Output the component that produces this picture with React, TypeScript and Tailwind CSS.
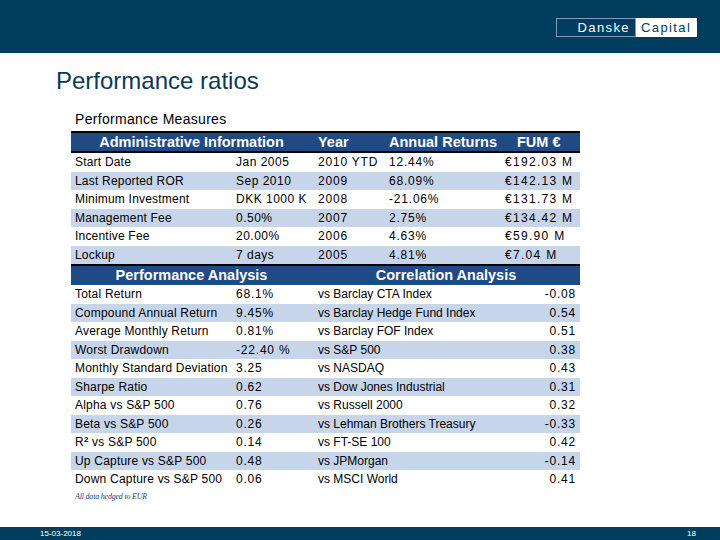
import React from 'react'

const adminRows = [
  ['Start Date', 'Jan 2005', '2010 YTD', '12.44%', '€192.03 M'],
  ['Last Reported ROR', 'Sep 2010', '2009', '68.09%', '€142.13 M'],
  ['Minimum Investment', 'DKK 1000 K', '2008', '-21.06%', '€131.73 M'],
  ['Management Fee', '0.50%', '2007', '2.75%', '€134.42 M'],
  ['Incentive Fee', '20.00%', '2006', '4.63%', '€59.90 M'],
  ['Lockup', '7 days', '2005', '4.81%', '€7.04 M'],
]

const perfRows: [React.ReactNode, string, string, string][] = [
  ['Total Return', '68.1%', 'vs Barclay CTA Index', '-0.08'],
  ['Compound Annual Return', '9.45%', 'vs Barclay Hedge Fund Index', '0.54'],
  ['Average Monthly Return', '0.81%', 'vs Barclay FOF Index', '0.51'],
  ['Worst Drawdown', '-22.40 %', 'vs S&P 500', '0.38'],
  ['Monthly Standard Deviation', '3.25', 'vs NASDAQ', '0.43'],
  ['Sharpe Ratio', '0.62', 'vs Dow Jones Industrial', '0.31'],
  ['Alpha vs S&P 500', '0.76', 'vs Russell 2000', '0.32'],
  ['Beta vs S&P 500', '0.26', 'vs Lehman Brothers Treasury', '-0.33'],
  [<>R<sup className="text-[8px] font-bold">2</sup> vs S&P 500</>, '0.14', 'vs FT-SE 100', '0.42'],
  ['Up Capture vs S&P 500', '0.48', 'vs JPMorgan', '-0.14'],
  ['Down Capture vs S&P 500', '0.06', 'vs MSCI World', '0.41'],
]

const Logo = () => (
  <div className="flex items-stretch h-[19px] text-[13px] tracking-[1.4px]">
    <div className="w-[80px] border border-[#7f9db3] flex items-center justify-end pr-[5px] text-white">
      Danske
    </div>
    <div className="w-[61px] bg-white flex items-center pl-[4px] text-[#003d5e] border border-white">
      Capital
    </div>
  </div>
)

const App = () => {
  return (
    <div className="w-[720px] h-[540px] flex flex-col bg-white font-['Liberation_Sans',Arial,sans-serif] overflow-hidden">
      {/* Kopfleiste */}
      <div className="h-[53px] bg-[#003d5e] flex items-start justify-end pr-[23px] pt-[18px]">
        <Logo />
      </div>

      <div className="flex-1 flex flex-col">
        <h1 className="ml-[56px] mt-[14px] text-[24px] leading-[28px] text-[#0b3a55]">Performance ratios</h1>
        <div className="ml-[75px] mt-[16px] text-[14px] leading-[16px] tracking-[0.3px] text-black">
          Performance Measures
        </div>

        {/* Tabelle */}
        <div className="ml-[71px] mt-[4px] w-[509px] text-[12px] text-black">
          <div className="grid grid-cols-[241px_74px_114px_80px] h-[22px] bg-[#1f4a85] border-y-2 border-black text-white font-bold text-[14.5px] items-center leading-[17px]">
            <div className="text-center">Administrative Information</div>
            <div className="pl-[6px]">Year</div>
            <div className="pl-[3px]">Annual Returns</div>
            <div className="pl-[17px]">FUM €</div>
          </div>
          {adminRows.map((r, i) => (
            <div
              key={i}
              className={`grid grid-cols-[162px_79px_74px_114px_80px] h-[18.5px] items-center leading-[14px] ${i % 2 === 1 ? 'bg-[#c6d5ea]' : ''}`}
            >
              <div className="pl-[4px] tracking-[0.2px] whitespace-nowrap">{r[0]}</div>
              <div className="pl-[3px] tracking-[0.5px] whitespace-nowrap">{r[1]}</div>
              <div className="pl-[6px] tracking-[0.8px] whitespace-nowrap">{r[2]}</div>
              <div className="pl-[3px] tracking-[0.8px]">{r[3]}</div>
              <div className="pl-[5px] tracking-[1.3px] whitespace-nowrap">{r[4]}</div>
            </div>
          ))}

          <div className="grid grid-cols-[241px_268px] h-[21px] bg-[#1f4a85] border-t-2 border-black text-white font-bold text-[14.5px] items-center leading-[17px]">
            <div className="text-center">Performance Analysis</div>
            <div className="text-center">Correlation Analysis</div>
          </div>
          {perfRows.map((r, i) => (
            <div
              key={i}
              className={`grid grid-cols-[162px_79px_1fr_auto] h-[18.5px] items-center leading-[14px] ${i % 2 === 1 ? 'bg-[#c6d5ea]' : ''}`}
            >
              <div className="pl-[4px] tracking-[0.2px] whitespace-nowrap">{r[0]}</div>
              <div className="pl-[3px] tracking-[0.8px]">{r[1]}</div>
              <div className="pl-[6px] whitespace-nowrap">{r[2]}</div>
              <div className="pr-[4px] tracking-[0.8px]">{r[3]}</div>
            </div>
          ))}
        </div>

        <div className="ml-[75px] mt-[2px] text-[8px] tracking-[-0.2px] italic text-[#1f3f7a] font-['Liberation_Serif',serif]">
          All data hedged to EUR
        </div>
      </div>

      {/* Fußzeile */}
      <div className="h-[13px] bg-[#003d5e] flex items-center justify-between pl-[40px] pr-[24px] text-white text-[8px] leading-none">
        <span>15-03-2018</span>
        <span>18</span>
      </div>
    </div>
  )
}

export default App
